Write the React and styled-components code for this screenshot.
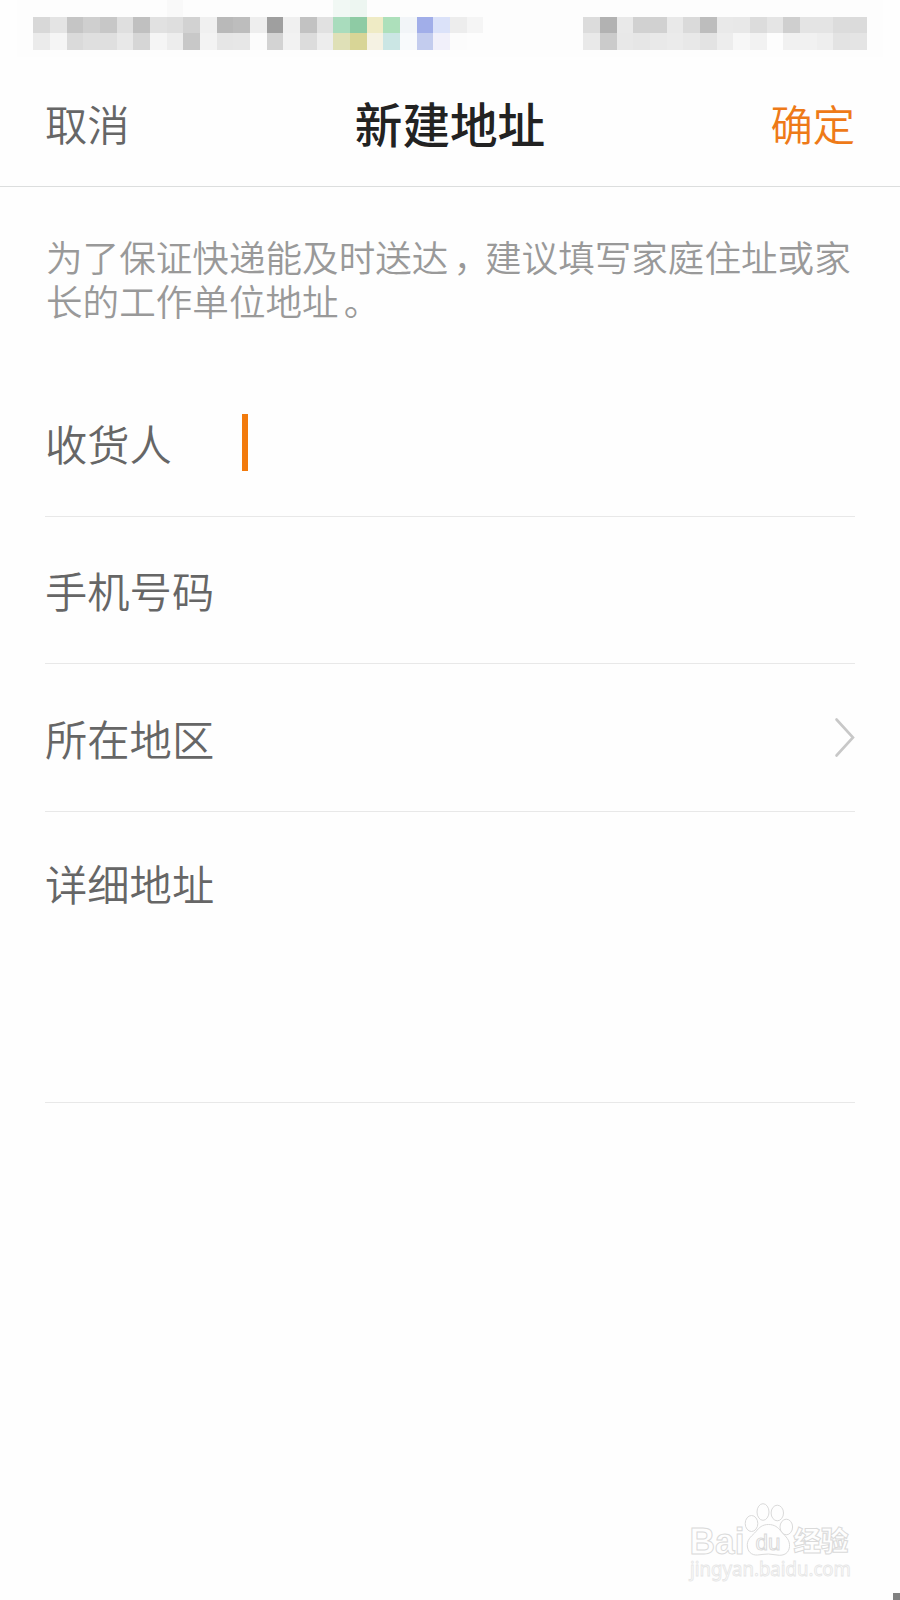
import { useState } from "react";
import styled, { createGlobalStyle } from "styled-components";

const GlobalStyle = createGlobalStyle`
  * {
    box-sizing: border-box;
  }
  body {
    margin: 0;
    background-color: #fefefe;
    font-family: "Noto Sans CJK SC", "Noto Sans", sans-serif;
  }
`;
const Screen = styled.div`
  width: 900px;
  height: 1600px;
  display: flex;
  flex-direction: column;
  overflow: hidden;
  background-color: #fefefe;
`;

// status bar

const StatusBar = styled.div`
  height: 67px;
  flex-shrink: 0;
`;

// header

const Header = styled.header`
  height: 120px;
  flex-shrink: 0;
  padding: 0 45px 8px 45px;
  display: grid;
  grid-template-columns: 1fr auto 1fr;
  align-items: center;
  border-bottom: 1px solid #dcdede;
`;
const HeaderButton = styled.button`
  justify-self: ${(props) => (props.$primary ? "end" : "start")};
  padding: 0;
  border: none;
  background: none;
  font-family: inherit;
  font-size: 42.3px;
  line-height: 60px;
  font-weight: 350;
  color: ${(props) => (props.$primary ? "#ee7a18" : "#666")};
  cursor: pointer;
`;
const Title = styled.h1`
  margin: 0;
  font-size: 47.6px;
  line-height: 60px;
  font-weight: 500;
  color: #222;
`;

// form

const Hint = styled.p`
  margin: 48px 45px 0 46px;
  height: 134px;
  font-size: 36.6px;
  line-height: 43.5px;
  font-weight: 350;
  color: #999;
  white-space: nowrap;
`;
const Mark = styled.span`
  margin: 0 -5px 0 5px;
`;
const Form = styled.div`
  margin: 0 45px;
`;
const Row = styled.label`
  height: ${(props) => props.$height}px;
  display: flex;
  align-items: ${(props) => (props.$top ? "flex-start" : "center")};
  padding-top: ${(props) => props.$top || 0}px;
  border-bottom: 1px solid #e8e8e8;
`;
const Label = styled.span`
  font-size: 42.3px;
  line-height: 60px;
  font-weight: 350;
  color: #666;
`;
const Caret = styled.span`
  width: 6px;
  height: 57px;
  margin: 0 0 1px 70px;
  background-color: #f27a0c;
`;
const Arrow = styled.svg`
  width: 22px;
  height: 42px;
  margin-left: auto;
`;

// watermark

const Footer = styled.footer`
  height: 120px;
  margin-top: auto;
  display: flex;
  justify-content: flex-end;
  align-items: flex-end;
`;
const Corner = styled.div`
  width: 7px;
  height: 7px;
  background-color: #808080;
`;

const cell = 50 / 3;
const mosaic = [
  {
    row: 0,
    start: 10,
    colors: "f9f9f9".split(" "),
  },
  {
    row: 0,
    start: 20,
    colors: "f1f8f4 edf6f1".split(" "),
  },
  {
    row: 1,
    start: 2,
    colors:
      "d8d8d8 e4e4e4 c5c5c5 cfcfcf c7c7c7 dfdfdf c0c0c0 e1e1e1 dedede d2d2d2 f0f0f0 b9b9b9 bdbdbd eeeeee 9f9f9f f0f0f0 c2c2c2 e1e1e1 a9dcbd 8ecba4 efebc5 ade0bb f2f5f8 a1aee9 dbe2f9 ededed f5f5f5".split(" "),
  },
  {
    row: 1,
    start: 35,
    colors:
      "dcdcdc b2b2b2 e9e9e9 d1d1d1 d1d1d1 e9e9e9 dadada bdbdbd e9e9e9 e8e8e8 dcdcdc e5e5e5 cfcfcf e4e4e4 e4e4e4 dcdcdc dbdbdb".split(" "),
  },
  {
    row: 2,
    start: 2,
    colors:
      "ebebeb f5f5f5 dadada dfdfdf dfdfdf e8e8e8 d6d6d6 f5f5f5 ededed c8c8c8 f3f3f3 e6e6e6 e7e7e7 fcfcfc d3d3d3 f2f2f2 dcdcdc ededed dfe0b7 d8d596 f5f2e3 cbe6e4 f8fafc c3ccee f1f0fa fcfcfc fdfdfd".split(" "),
  },
  {
    row: 2,
    start: 35,
    colors:
      "e9e9e9 cbcbcb e8e8e8 e6e6e6 e9e9e9 ebebeb e8e8e8 e3e3e3 ededed f7f7f7 f2f2f2 fdfdfd f1f1f1 f1f1f1 eeeeee e3e3e3 e4e4e4".split(" "),
  },
];

function Mosaic() {
  return (
    <svg width="900" height="67" shapeRendering="crispEdges">
      <rect x="17" y="0" width="866" height="57" fill="#fdfdfd" />
      {mosaic.map((strip) =>
        strip.colors.map((color, i) => (
          <rect
            key={`${strip.row}-${strip.start + i}`}
            x={(strip.start + i) * cell}
            y={strip.row * cell}
            width={cell}
            height={cell}
            fill={`#${color}`}
          />
        ))
      )}
    </svg>
  );
}

function Watermark() {
  return (
    <svg width="233" height="120" fill="#fefefe" stroke="#dadada">
      <text
        x="29.5"
        y="73.5"
        fontSize="37"
        fontWeight="700"
        fontFamily="Liberation Sans, Arial, sans-serif"
        textLength="55"
        lengthAdjust="spacingAndGlyphs"
      >
        Bai
      </text>
      <ellipse cx="91.5" cy="43.5" rx="6.3" ry="8" />
      <ellipse cx="103" cy="32" rx="6" ry="8.3" />
      <ellipse cx="117.3" cy="33" rx="6.2" ry="7.8" />
      <ellipse cx="126.3" cy="47" rx="6.3" ry="7.8" />
      <path d="M108.500 44.500c-6 0-9.500 3-12.500 7-3.500 4-8.500 7-8.700 13-.2 7 4.200 11 10.200 10.500 4-.3 7-1 11-1s7 1.300 11 1.300c7 0 10.500-4.500 10-11-.5-6-5.500-9-8.500-13-3-4-6.500-6.800-12.500-6.800z" />
      <text
        x="95.5"
        y="69.5"
        fontSize="22"
        fontFamily="Liberation Sans, Arial, sans-serif"
        textLength="25"
        lengthAdjust="spacingAndGlyphs"
      >
        du
      </text>
      <text
        x="133.5"
        y="71"
        fontSize="27.5"
        fontWeight="900"
        fontFamily="Noto Sans CJK SC, sans-serif"
      >
        经验
      </text>
      <text
        x="30"
        y="95.5"
        fontSize="20"
        stroke="#e6e6e6"
        strokeWidth="0.9"
        fontFamily="Noto Sans, sans-serif"
        textLength="161"
        lengthAdjust="spacingAndGlyphs"
      >
        jingyan.baidu.com
      </text>
    </svg>
  );
}

function App() {
  const [active, setActive] = useState("name");
  return (
    <>
      <GlobalStyle />
      <Screen>
        <StatusBar>
          <Mosaic />
        </StatusBar>
        <Header>
          <HeaderButton>取消</HeaderButton>
          <Title>新建地址</Title>
          <HeaderButton $primary>确定</HeaderButton>
        </Header>
        <Hint>
          为了保证快递能及时送达<Mark>，</Mark>建议填写家庭住址或家
          <br />
          长的工作单位地址<Mark>。</Mark>
        </Hint>
        <Form>
          <Row $height={148} onClick={() => setActive("name")}>
            <Label>收货人</Label>
            {active === "name" && <Caret />}
          </Row>
          <Row $height={147} onClick={() => setActive("phone")}>
            <Label>手机号码</Label>
            {active === "phone" && <Caret />}
          </Row>
          <Row $height={148}>
            <Label>所在地区</Label>
            <Arrow viewBox="0 0 22 42" fill="none" stroke="#c8c8c8" strokeWidth="2.6">
              <path d="M3.5 2.5L20 20.5L3.5 38.5" strokeLinecap="round" />
            </Arrow>
          </Row>
          <Row $height={291} $top={41}>
            <Label>详细地址</Label>
          </Row>
        </Form>
        <Footer>
          <Watermark />
          <Corner />
        </Footer>
      </Screen>
    </>
  );
}

export default App;
